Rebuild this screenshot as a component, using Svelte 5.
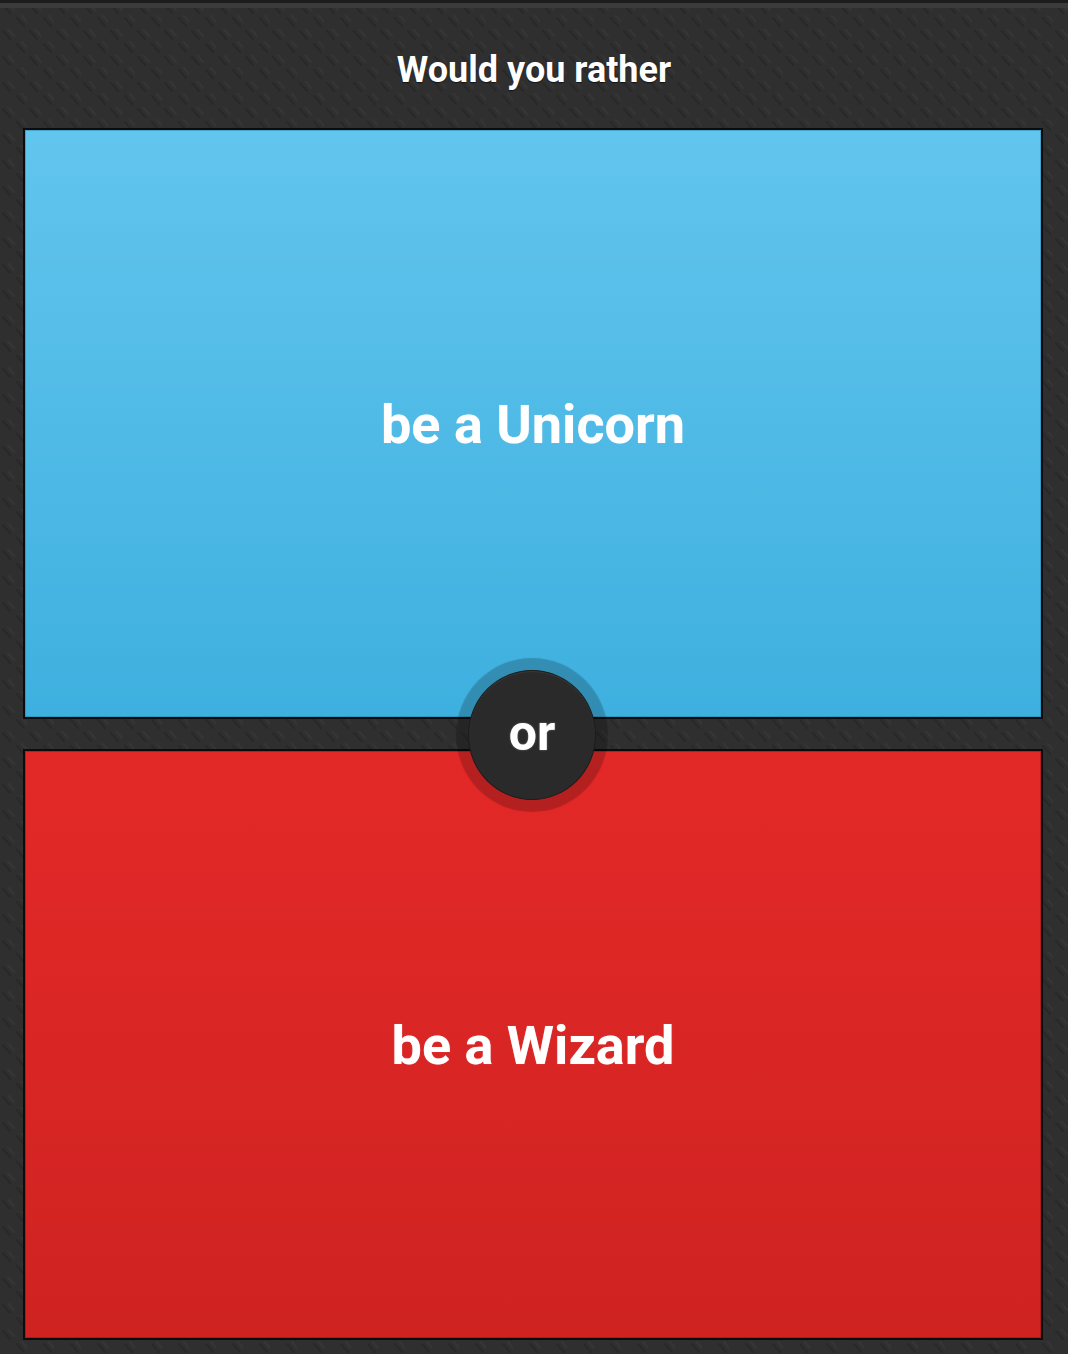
<script>
    let title = 'Would you rather';
    let optionA = 'be a Unicorn';
    let optionB = 'be a Wizard';
</script>

<div class="screen">
    <svg class="texture" width="100%" height="100%" aria-hidden="true">
        <defs>
            <pattern id="weave" width="27" height="26" patternUnits="userSpaceOnUse">
                <path d="M3 2l7 8M17 15l7 8" stroke="#202020" stroke-width="2.5" stroke-linecap="round" opacity="0.45" />
                <path d="M8 0l6 7M22 13l6 7" stroke="#3e3e3e" stroke-width="2" stroke-linecap="round" opacity="0.4" />
            </pattern>
        </defs>
        <rect width="100%" height="100%" fill="url(#weave)" />
    </svg>

    <header class="title">{title}</header>

    <main class="choices">
        <button class="choice choice--blue">{optionA}</button>
        <button class="choice choice--red">{optionB}</button>
        <div class="or">or</div>
    </main>
</div>

<style>
    :global(body) {
        background: #2f2f2f;
    }

    .screen {
        position: relative;
        width: 1068px;
        height: 1354px;
        box-sizing: border-box;
        overflow: hidden;
        background: #2f2f2f;
        border-top: 3px solid #1c1c1c;
        font-family: Roboto, "Liberation Sans", sans-serif;
        color: #fff;
    }

    .screen::before {
        content: "";
        position: absolute;
        top: 0;
        left: 0;
        right: 0;
        height: 5px;
        background: #3b3b3b;
        z-index: 1;
    }

    .texture {
        position: absolute;
        top: 0;
        left: 0;
    }

    .title {
        position: relative;
        height: 125px;
        padding-top: 9px;
        box-sizing: border-box;
        display: flex;
        align-items: center;
        justify-content: center;
        font-size: 36px;
        font-weight: 700;
        text-shadow: 0 1px 1px rgba(0, 0, 0, 0.6);
    }

    .choices {
        position: relative;
        display: flex;
        flex-direction: column;
        gap: 30px;
        margin: 0 25px 0 23px;
    }

    .choice {
        display: block;
        width: 100%;
        height: 591px;
        padding: 2px 0 0;
        border: 2px solid #0c0c0c;
        font: inherit;
        font-size: 54px;
        font-weight: 700;
        color: #fff;
        text-shadow: 0 0 1px rgba(255, 255, 255, 0.35);
    }

    .choice--blue {
        background: linear-gradient(#62c5ee, #3eb0df);
        box-shadow: inset 0 0 0 1px rgba(20, 100, 140, 0.35);
    }

    .choice--red {
        background: linear-gradient(#e32928, #cf2321);
        box-shadow: inset 0 0 0 1px rgba(120, 15, 15, 0.4);
    }

    .or {
        position: absolute;
        top: 542px;
        left: 445px;
        width: 128px;
        height: 130px;
        box-sizing: border-box;
        border: 1px solid #1c1c1c;
        border-radius: 50%;
        display: flex;
        align-items: center;
        justify-content: center;
        padding-bottom: 4px;
        background: #2a2a2a;
        font-size: 50px;
        font-weight: 700;
        text-shadow: 0 0 2px rgba(255, 255, 255, 0.4);
        box-shadow: 0 0 1px 12px rgba(0, 0, 0, 0.2), inset 0 1px 1px rgba(255, 255, 255, 0.08);
    }
</style>
